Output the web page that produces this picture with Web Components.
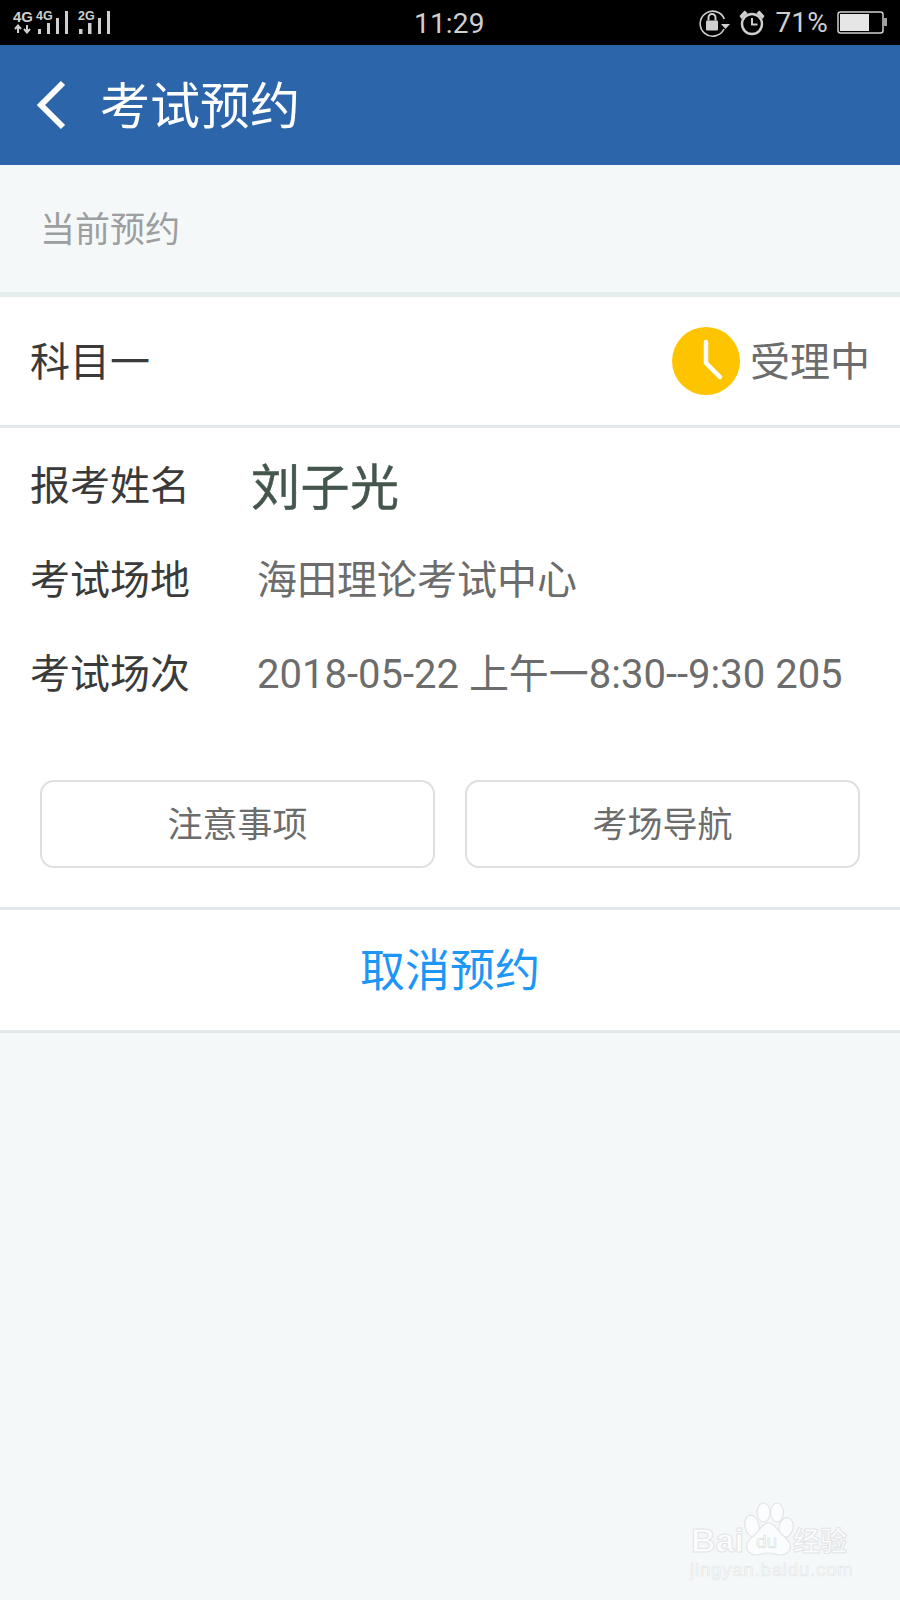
<!DOCTYPE html>
<html lang="zh">
<head>
<meta charset="utf-8">
<title>考试预约</title>
<style>
  html, body { margin: 0; padding: 0; }
  body { width: 900px; height: 1600px; overflow: hidden; background: #f5f8f9; font-family: Roboto, "Noto Sans CJK SC", sans-serif; }
  app-page { display: block; }
</style>
</head>
<body>
<app-page>
  <status-bar></status-bar>
  <app-header>考试预约</app-header>
  <section-label>当前预约</section-label>
  <booking-card></booking-card>
  <baidu-mark></baidu-mark>
</app-page>

<script>
"use strict";
const FONT = 'Roboto, "Noto Sans CJK SC", sans-serif';

function define(name, html) {
  customElements.define(name, class extends HTMLElement {
    constructor() {
      super();
      const shadow = this.attachShadow({ mode: 'open' });
      const template = document.createElement('template');
      template.innerHTML = html;
      shadow.appendChild(template.content.cloneNode(true));
    }
  });
}

define('app-page', `
  <style>:host { display: block; height: 1600px; position: relative; }</style>
  <slot></slot>
`);

// top bar with the signal, clock, alarm and battery icons
define('status-bar', `
  <style>
    :host { display: flex; align-items: center; justify-content: space-between; height: 45px; background: #000; color: #cfcfcf; padding: 0 13px; box-sizing: border-box; font-family: ${FONT}; position: relative; }
    .side { display: flex; align-items: center; }
    .clock { position: absolute; left: 414px; top: 6px; font-size: 28px; line-height: 36px; letter-spacing: .2px; }
    .pct { font-size: 28px; line-height: 36px; margin: 0 9px 0 10px; letter-spacing: .2px; }
    svg { display: block; }
    svg text { font-family: "Liberation Sans", sans-serif; fill: #cfcfcf; }
  </style>
  <div class="side">
    <svg width="100" height="45" viewBox="0 0 100 45">
      <text x="0" y="22" font-size="15" font-weight="700">4G</text>
      <path d="M5 33v-7M2 29l3-3.500 3 3.500M14 25v7M11 29l3 3.500 3-3.500" stroke="#cfcfcf" stroke-width="2" fill="none"/>
      <text x="23" y="20" font-size="12.500" font-weight="700">4G</text>
      <path d="M25 29h3v5h-3zM34 23h3v11h-3zM43 18h3v16h-3zM52 11h3v23h-3z" fill="#cfcfcf"/>
      <text x="65" y="20" font-size="12.500" font-weight="700">2G</text>
      <path d="M66 29h3.500v5h-3.500zM75 23h3.500v11h-3.500zM85 18h3v16h-3zM94 11h3v23h-3z" fill="#cfcfcf"/>
    </svg>
  </div>
  <div class="clock">11:29</div>
  <div class="side">
    <svg width="31" height="28" viewBox="0 0 31 28">
      <path d="M25 20a12.500 12.500 0 1 1 .3-10" fill="none" stroke="#cfcfcf" stroke-width="1.600"/>
      <path d="M22 15h9l-4.500 5z" fill="#cfcfcf"/>
      <rect x="7" y="11.500" width="12" height="10" rx="1" fill="#cfcfcf"/>
      <path d="M9.500 11.500V8.500a3.500 3.500 0 0 1 7 0v3" fill="none" stroke="#cfcfcf" stroke-width="2"/>
    </svg>
    <svg style="margin-left:9px" width="26" height="27" viewBox="0 0 26 27">
      <circle cx="13" cy="15" r="10" fill="none" stroke="#cfcfcf" stroke-width="2.400"/>
      <path d="M13 9v6.500h5.500" fill="none" stroke="#cfcfcf" stroke-width="2"/>
      <path d="M0.500 7l5-5.500 3 2.500-6 6zM25.500 7l-5-5.500-3 2.500 6 6z" fill="#cfcfcf"/>
    </svg>
    <span class="pct">71%</span>
    <svg width="50" height="23" viewBox="0 0 50 23">
      <rect x="1" y="1" width="45" height="21" rx="2.500" fill="none" stroke="#cfcfcf" stroke-width="1.500"/>
      <rect x="3" y="3" width="29" height="17" fill="#e6e6e6"/>
      <rect x="47" y="7" width="3" height="8" fill="#a0a0a0"/>
    </svg>
  </div>
`);

define('app-header', `
  <style>
    :host { display: flex; align-items: center; height: 120px; background: #2c65a9; color: #fff; font-family: ${FONT}; padding-left: 36px; box-sizing: border-box; }
    svg { display: block; margin-right: 34px; }
    .title { font-size: 50px; line-height: 60px; margin-top: 4px; }
  </style>
  <svg width="30" height="52" viewBox="0 0 30 52"><path d="M27 4 5 26l22 22" fill="none" stroke="#fff" stroke-width="6"/></svg>
  <div class="title"><slot></slot></div>
`);

define('section-label', `
  <style>
    :host { display: flex; align-items: center; height: 127px; padding: 0 0 4px 40px; box-sizing: border-box; color: #9c9e9f; font-size: 35px; font-family: ${FONT}; }
  </style>
  <slot></slot>
`);

define('info-row', `
  <style>
    :host { display: flex; align-items: center; height: 94px; padding-left: 30px; font-family: ${FONT}; font-size: 40px; color: #3a3a3a; }
    .key { width: 227px; flex: none; }
    .val { color: #6c6c6c; white-space: nowrap; }
    :host([big]) .key { width: 222px; }
    :host([big]) .val { font-size: 49px; letter-spacing: .5px; color: #45564d; font-weight: 400; -webkit-text-stroke: .5px #45564d; margin-left: -1px; }
  </style>
  <div class="key"><slot name="key"></slot></div>
  <div class="val"><slot></slot></div>
`);

define('outline-button', `
  <style>
    :host { display: flex; align-items: center; justify-content: center; flex: 1; height: 88px; box-sizing: border-box; border: 2px solid #dfdfdf; border-radius: 14px; padding-bottom: 5px; background: #fff; color: #6c6c6c; font-size: 35px; font-family: ${FONT}; }
  </style>
  <slot></slot>
`);

define('booking-card', `
  <style>
    :host { display: block; background: #fff; border-top: 5px solid #e4ecec; border-bottom: 3px solid #e3e8ea; font-family: ${FONT}; }
    .subject { display: flex; align-items: center; justify-content: space-between; height: 128px; padding: 0 30px; border-bottom: 3px solid #e3e8ea; font-size: 40px; color: #3a3a3a; }
    .subject span { position: relative; top: -2px; }
    .state { display: flex; align-items: center; gap: 10px; color: #6c6c6c; }
    .info { padding-top: 8px; display: flex; flex-direction: column; }
    .buttons { display: flex; gap: 30px; padding: 62px 40px 39px; border-bottom: 3px solid #e3e8ea; }
    .cancel { height: 120px; box-sizing: border-box; padding-bottom: 5px; display: flex; align-items: center; justify-content: center; color: #1e96f5; font-size: 45px; }
    svg { display: block; position: relative; top: 2px; }
  </style>
  <div class="subject">
    <span>科目一</span>
    <span class="state">
      <svg width="68" height="68" viewBox="0 0 68 68">
        <circle cx="34" cy="34" r="34" fill="#ffc400"/>
        <path d="M34 15v21l14 14" fill="none" stroke="#fff" stroke-width="4.500" stroke-linecap="round" stroke-linejoin="round"/>
      </svg>
      受理中
    </span>
  </div>
  <div class="info">
    <info-row big><span slot="key">报考姓名</span>刘子光</info-row>
    <info-row><span slot="key">考试场地</span>海田理论考试中心</info-row>
    <info-row><span slot="key">考试场次</span>2018-05-22 上午一8:30--9:30 205</info-row>
  </div>
  <div class="buttons">
    <outline-button>注意事项</outline-button>
    <outline-button>考场导航</outline-button>
  </div>
  <div class="cancel">取消预约</div>
`);

// watermark sits over the empty page background
define('baidu-mark', `
  <style>
    :host { display: block; position: absolute; left: 690px; top: 1500px; width: 170px; height: 80px; font-family: "Liberation Sans", sans-serif; color: #fbfcfd; }
    span { position: absolute; white-space: nowrap; -webkit-text-stroke: 1px #e2e5e6; }
    .bai { left: 1px; top: 22px; font-size: 34px; line-height: 36px; font-weight: 700; }
    .cn { left: 103px; top: 24px; font-size: 27px; line-height: 32px; font-family: "Noto Sans CJK SC", sans-serif; font-weight: 700; }
    .url { left: 0; top: 60px; font-size: 18.500px; line-height: 20px; -webkit-text-stroke: .6px #e2e5e6; letter-spacing: .85px; }
    .du { left: 66px; top: 31px; font-size: 19px; line-height: 22px; -webkit-text-stroke: .6px #d8dcdd; }
    svg { position: absolute; left: 50px; top: 0; }
  </style>
  <svg width="60" height="58" viewBox="0 0 60 58" fill="#fbfcfd" stroke="#e2e5e6" stroke-width="1.200">
    <ellipse cx="12" cy="26" rx="7" ry="11" transform="rotate(-12 12 26)"/>
    <ellipse cx="23.500" cy="12.500" rx="6.500" ry="9.500"/>
    <ellipse cx="37" cy="12.500" rx="6.500" ry="9.500"/>
    <ellipse cx="46" cy="27.500" rx="7" ry="10" transform="rotate(12 46 27.500)"/>
    <path d="M28.500 23c-6 0-8 6-13 11-6 5-9 8-9 12 0 6 5 9 10 9 5 0 8-2 12-2s7 2 12 2c5 0 10-3 10-9 0-4-3-7-9-12-5-5-7-11-13-11z"/>
  </svg>
  <span class="bai">Bai</span>
  <span class="du">du</span>
  <span class="cn">经验</span>
  <span class="url">jingyan.baidu.com</span>
`);
</script>
</body>
</html>
